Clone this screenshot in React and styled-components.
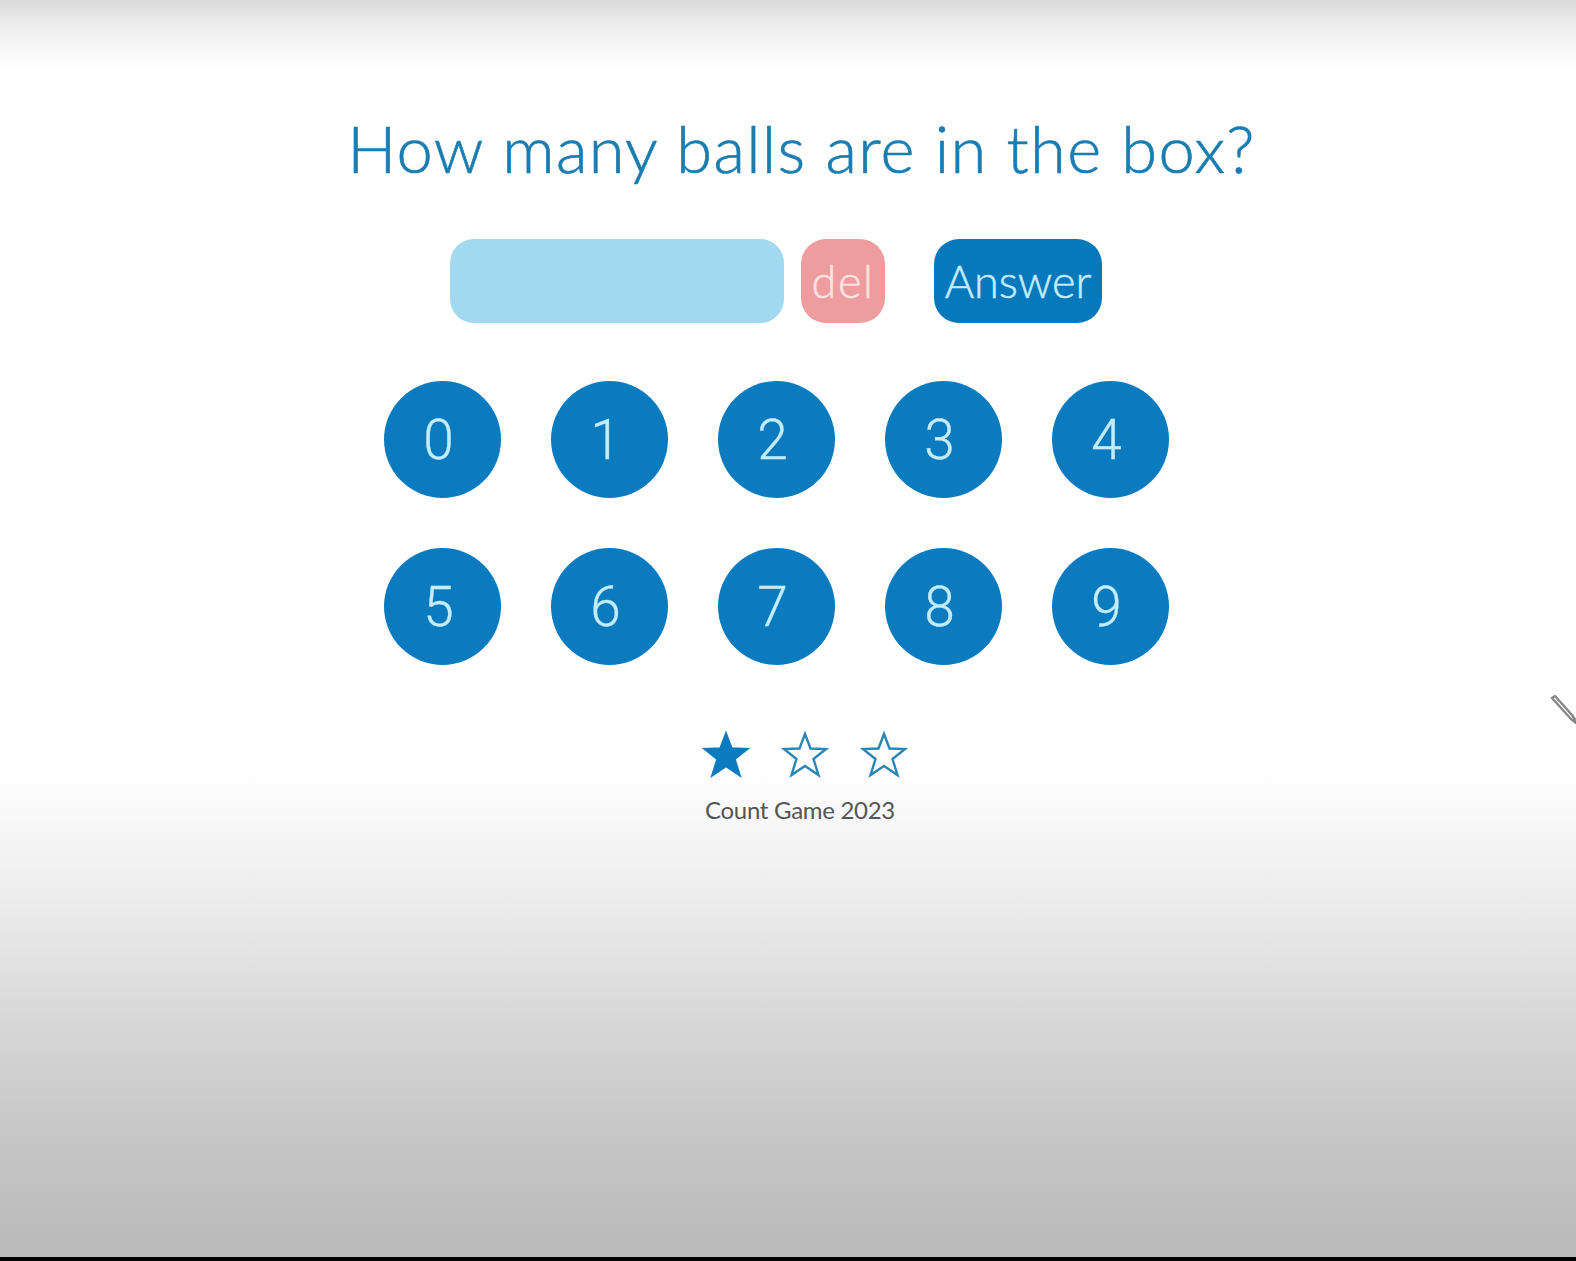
import styled, { createGlobalStyle } from 'styled-components'

const GlobalStyle = createGlobalStyle`
  html, body {
    margin: 0;
    padding: 0;
    background: #fff;
  }
`

const Page = styled.div`
  position: relative;
  width: 1576px;
  height: 1261px;
  overflow: hidden;
  display: flex;
  flex-direction: column;
  font-family: Lato, "Liberation Sans", sans-serif;
`

const Screen = styled.main`
  flex: 1;
  display: flex;
  flex-direction: column;
  align-items: center;
  padding-top: 109px;
  background: linear-gradient(
    to bottom,
    #dadada 0,
    #f0f0f0 30px,
    #ffffff 72px,
    #ffffff 770px,
    #ececec 900px,
    #d6d6d6 1030px,
    #c6c6c6 1140px,
    #b9b9b9 1257px
  );
`

const BottomBar = styled.div`
  height: 4px;
  background: #000;
`

const Title = styled.h1`
  margin: 0 0 0 27px;
  font-size: 65px;
  line-height: 78px;
  font-weight: 300;
  letter-spacing: 1.3px;
  -webkit-text-stroke: 0.7px #1a7db2;
  color: #1a7db2;
  white-space: nowrap;
`

const AnswerRow = styled.div`
  display: flex;
  margin: 52px 0 0 -24px;
  height: 84px;
`

const AnswerInput = styled.div`
  width: 334px;
  border-radius: 24px;
  background: #a3d8f1;
`

const ActionButton = styled.button`
  width: ${(p) => p.$width}px;
  margin-left: ${(p) => p.$gap}px;
  padding: 0;
  border: 0;
  border-radius: 25px;
  background: ${(p) => p.$bg};
  color: ${(p) => p.$color};
  font-family: inherit;
  font-size: 45px;
  font-weight: 300;
  letter-spacing: ${(p) => p.$spacing || 0}px;
  -webkit-text-stroke: 0.5px ${(p) => p.$color};
`

const Keypad = styled.div`
  display: grid;
  grid-template-columns: repeat(5, 117px);
  grid-auto-rows: 117px;
  gap: 50px;
  margin: 58px 0 0 -24px;
`

const Key = styled.button`
  padding: 0 7px 0 0;
  border: 0;
  border-radius: 50%;
  background: #0a7bbf;
  color: #c4ecfb;
  font-family: Roboto, sans-serif;
  font-size: 55px;
  font-weight: 300;
  -webkit-text-stroke: 0.3px #c4ecfb;
`

const Stars = styled.div`
  display: flex;
  gap: 29px;
  margin: 64px 0 0 34px;
`

const Footnote = styled.p`
  margin: 15px 0 0 24px;
  font-size: 24px;
  line-height: 32px;
  font-weight: 400;
  letter-spacing: -0.3px;
  color: #555;
`

const Pen = styled.svg`
  position: absolute;
  left: 1550px;
  top: 694px;
`

const starPoints = '25,5 30.5,19.5 46,20 33.5,30 38.5,46 25,37 11.5,46 16.5,30 4,20 19.5,19.5'

const Star = ({ filled }) => (
  <svg width="50" height="50" viewBox="0 0 50 50">
    <polygon
      points={starPoints}
      fill={filled ? '#0a7bbf' : 'none'}
      stroke={filled ? '#0a7bbf' : '#2a86b4'}
      strokeWidth="2.4"
      strokeLinejoin="miter"
    />
  </svg>
)

const App = () => {
  return (
    <Page>
      <GlobalStyle />
      <Screen>
        <Title>How many balls are in the box?</Title>
        <AnswerRow>
          <AnswerInput />
          <ActionButton $width={84} $gap={17} $bg="#ee9c9e" $color="#fbe3e2" $spacing={1.6}>del</ActionButton>
          <ActionButton $width={168} $gap={49} $bg="#0679bd" $color="#c4ecfb">Answer</ActionButton>
        </AnswerRow>
        <Keypad>
          {[0, 1, 2, 3, 4, 5, 6, 7, 8, 9].map((n) => (
            <Key key={n}>{n}</Key>
          ))}
        </Keypad>
        <Stars>
          <Star filled />
          <Star />
          <Star />
        </Stars>
        <Footnote>Count Game 2023</Footnote>
      </Screen>
      <BottomBar />
      <Pen width="26" height="30" viewBox="0 0 26 30">
        <path
          d="M2 4 L5 2 L22 21 L26 27 L26 29 L21 25 Z"
          fill="#fff"
          stroke="#888"
          strokeWidth="2.4"
          strokeLinejoin="round"
        />
      </Pen>
    </Page>
  )
}

export default App
